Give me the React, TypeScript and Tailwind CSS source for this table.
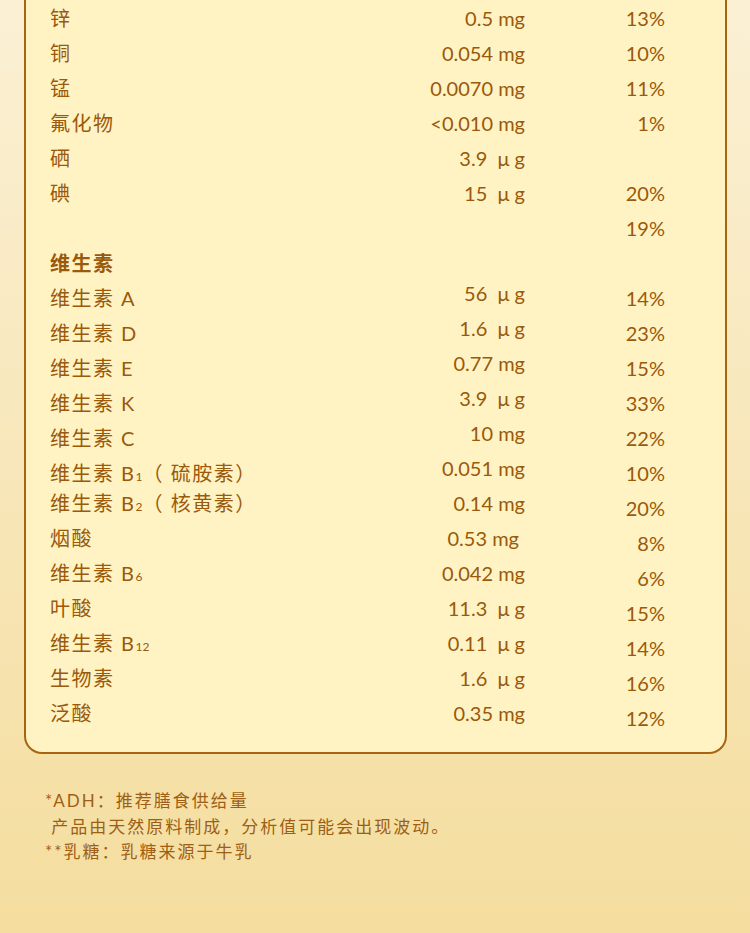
import React from 'react';

type Row = {
  name?: React.ReactNode;
  value?: string;
  pct?: string;
  header?: boolean;
  vit?: boolean;
  lift?: boolean;
  valuePad?: boolean;
};

const Sub = ({ children }: { children: React.ReactNode }) => (
  <span className="text-[12px] tracking-normal">{children}</span>
);

const rows: Row[] = [
  { name: '锌', value: '0.5 mg', pct: '13%' },
  { name: '铜', value: '0.054 mg', pct: '10%' },
  { name: '锰', value: '0.0070 mg', pct: '11%' },
  { name: '氟化物', value: '<0.010 mg', pct: '1%' },
  { name: '硒', value: '3.9 \u00a0μ g' },
  { name: '碘', value: '15 \u00a0μ g', pct: '20%' },
  { pct: '19%' },
  { name: '维生素', header: true },
  { name: '维生素 A', value: '56 \u00a0μ g', pct: '14%', vit: true },
  { name: '维生素 D', value: '1.6 \u00a0μ g', pct: '23%', vit: true },
  { name: '维生素 E', value: '0.77 mg', pct: '15%', vit: true },
  { name: '维生素 K', value: '3.9 \u00a0μ g', pct: '33%', vit: true },
  { name: '维生素 C', value: '10 mg', pct: '22%', vit: true },
  {
    name: (
      <>
        维生素 B<Sub>1</Sub>（ 硫胺素）
      </>
    ),
    value: '0.051 mg',
    pct: '10%',
    vit: true,
  },
  {
    name: (
      <>
        维生素 B<Sub>2</Sub>（ 核黄素）
      </>
    ),
    value: '0.14 mg',
    pct: '20%',
    vit: true,
    lift: true,
  },
  { name: '烟酸', value: '0.53 mg', pct: '8%', vit: true, lift: true, valuePad: true },
  {
    name: (
      <>
        维生素 B<Sub>6</Sub>
      </>
    ),
    value: '0.042 mg',
    pct: '6%',
    vit: true,
    lift: true,
  },
  { name: '叶酸', value: '11.3 \u00a0μ g', pct: '15%', vit: true, lift: true },
  {
    name: (
      <>
        维生素 B<Sub>12</Sub>
      </>
    ),
    value: '0.11 \u00a0μ g',
    pct: '14%',
    vit: true,
    lift: true,
  },
  { name: '生物素', value: '1.6 \u00a0μ g', pct: '16%', vit: true, lift: true },
  { name: '泛酸', value: '0.35 mg', pct: '12%', vit: true, lift: true },
];

export default function App() {
  return (
    <div
      className="w-[750px] h-[933px] overflow-hidden bg-gradient-to-b from-[#fbf0d4] to-[#f4dd9e] text-[#9a590b]"
      style={{ fontFamily: 'Lato, "Noto Sans CJK SC", sans-serif' }}
    >
      {/* Table card */}
      <div className="mx-[24px] w-[703px] bg-[#fff3c3] border-x-2 border-b-2 border-[#a7650f] rounded-b-[18px] pl-[24px] pr-[60px] pb-[17px]">
        {rows.map((row, i) => (
          <div
            key={i}
            className="grid grid-cols-[1fr_160px_140px] items-center h-[35px] text-[20px] leading-none"
          >
            <div
              className={`whitespace-nowrap tracking-[1.5px] ${row.header ? 'font-bold' : ''} ${
                row.lift ? 'mb-[9px]' : ''
              }`}
            >
              {row.name}
            </div>
            <div
              className={`text-right whitespace-nowrap ${row.vit ? 'mb-[10px]' : ''} ${
                row.valuePad ? 'pr-[6px]' : ''
              }`}
            >
              {row.value}
            </div>
            <div className="text-right">{row.pct}</div>
          </div>
        ))}
      </div>

      {/* Notes */}
      <div className="pl-[45px] mt-[34px] text-[17px] leading-[25.5px] tracking-[2px] text-[#9e5f14]">
        <p>*ADH：推荐膳食供给量</p>
        <p>&nbsp;产品由天然原料制成，分析值可能会出现波动。</p>
        <p>**乳糖：乳糖来源于牛乳</p>
      </div>
    </div>
  );
}
